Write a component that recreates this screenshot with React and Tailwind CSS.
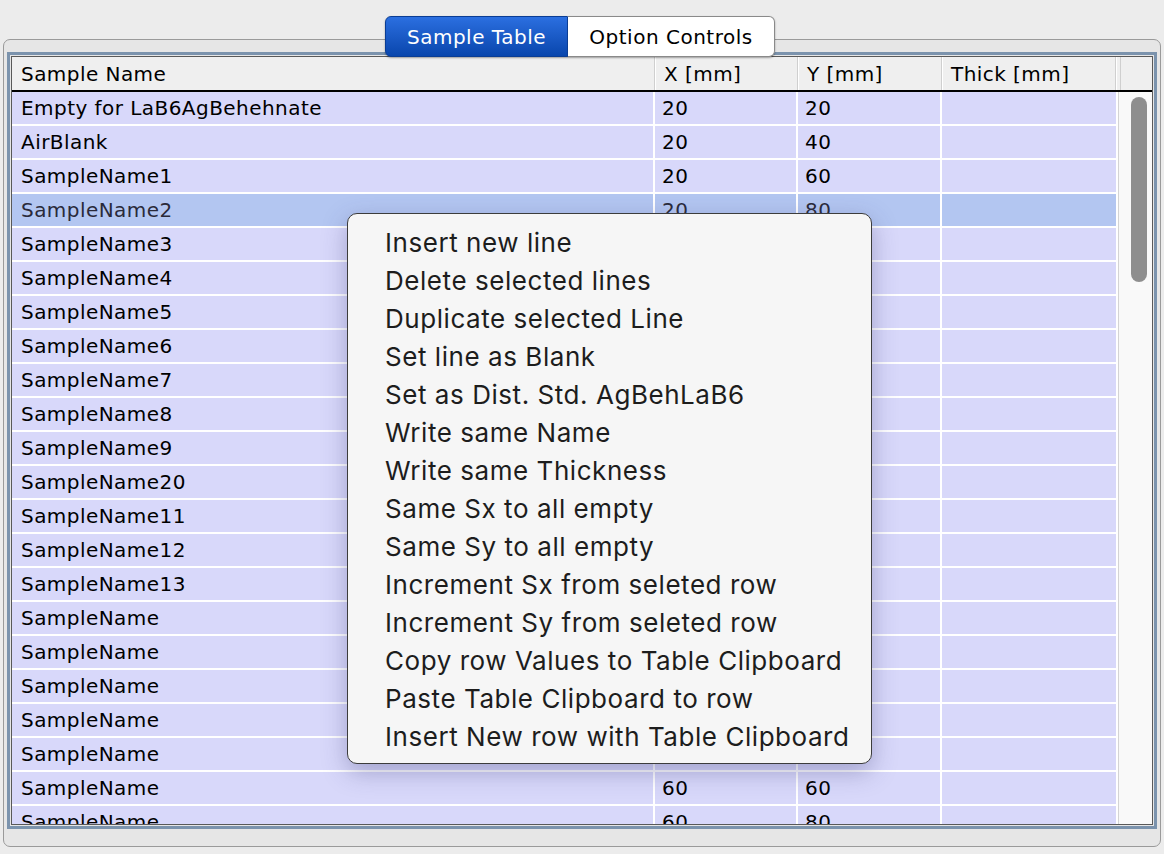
import React from "react";

const rows = [
  { name: "Empty for LaB6AgBehehnate", x: "20", y: "20" },
  { name: "AirBlank", x: "20", y: "40" },
  { name: "SampleName1", x: "20", y: "60" },
  { name: "SampleName2", x: "20", y: "80", selected: true },
  { name: "SampleName3", x: "40", y: "20" },
  { name: "SampleName4", x: "40", y: "40" },
  { name: "SampleName5", x: "40", y: "60" },
  { name: "SampleName6", x: "40", y: "80" },
  { name: "SampleName7", x: "60", y: "20" },
  { name: "SampleName8", x: "60", y: "40" },
  { name: "SampleName9", x: "60", y: "60" },
  { name: "SampleName20", x: "60", y: "80" },
  { name: "SampleName11", x: "80", y: "20" },
  { name: "SampleName12", x: "80", y: "40" },
  { name: "SampleName13", x: "80", y: "60" },
  { name: "SampleName", x: "80", y: "80" },
  { name: "SampleName", x: "40", y: "20" },
  { name: "SampleName", x: "40", y: "40" },
  { name: "SampleName", x: "60", y: "20" },
  { name: "SampleName", x: "60", y: "40" },
  { name: "SampleName", x: "60", y: "60" },
  { name: "SampleName", x: "60", y: "80" },
];

const menuItems = [
  "Insert new line",
  "Delete selected lines",
  "Duplicate selected Line",
  "Set line as Blank",
  "Set as Dist. Std. AgBehLaB6",
  "Write same Name",
  "Write same Thickness",
  "Same Sx to all empty",
  "Same Sy to all empty",
  "Increment Sx from seleted row",
  "Increment Sy from seleted row",
  "Copy row Values to Table Clipboard",
  "Paste Table Clipboard to row",
  "Insert New row with Table Clipboard",
];

const tableFont = { fontFamily: '"DejaVu Sans", "Liberation Sans", sans-serif' };

function HeaderCell({ label, width }) {
  return (
    <div
      className={`${width} h-full flex items-center pl-[9px] border-r border-[#cfcfcf] shadow-[1px_0_0_#ffffff]`}
    >
      {label}
    </div>
  );
}

function Row({ row }) {
  const bg = row.selected ? "bg-[#b3c6f1] text-[#2a2a3a]" : "bg-[#d8d8fa] text-black";
  return (
    <div className="flex h-[34px] border-b-2 border-white">
      <div className={`w-[643px] ${bg} flex items-center pl-[9px] border-r-2 border-white`}>{row.name}</div>
      <div className={`w-[143px] ${bg} flex items-center pl-[7px] border-r-2 border-white`}>{row.x}</div>
      <div className={`w-[144px] ${bg} flex items-center pl-[7px] border-r-2 border-white`}>{row.y}</div>
      <div className={`w-[174px] ${bg}`}></div>
    </div>
  );
}

export default function App() {
  return (
    <div className="w-[1164px] h-[854px] bg-[#ececec] relative overflow-hidden" style={tableFont}>
      <div className="pt-[39px] px-[3px]">
        {/* group box */}
        <div className="relative h-[808px] border border-[#9a9a9a] rounded-[7px] bg-[#e6e6e6] pt-[12px] px-[3px]">
          {/* blue frame */}
          <div className="h-[777px] border-[3px] border-[#7b93ad] bg-[#e6e6e6] p-px">
            <div className="h-full border border-[#595959] bg-white flex flex-col text-[20px] tracking-[0.45px]">
              {/* header */}
              <div className="flex h-[35px] bg-[#efefef] border-b-2 border-black shrink-0">
                <HeaderCell label="Sample Name" width="w-[643px]" />
                <HeaderCell label="X [mm]" width="w-[143px]" />
                <HeaderCell label="Y [mm]" width="w-[144px]" />
                <HeaderCell label="Thick [mm]" width="w-[174px]" />
                <div className="w-[5px] h-full border-r border-[#cfcfcf]"></div>
                <div className="flex-1"></div>
              </div>
              {/* body */}
              <div className="flex flex-1 min-h-0">
                <div className="w-[1106px] overflow-hidden bg-white">
                  {rows.map((r, i) => (
                    <Row key={i} row={r} />
                  ))}
                </div>
                <div className="flex-1 bg-[#f9f9f9] border-l border-[#d4d4d4] pl-[12px] pt-[5px]">
                  <div className="w-[16px] h-[185px] rounded-full bg-[#8e8e8e]"></div>
                </div>
              </div>
            </div>
          </div>
        </div>
      </div>

      {/* tabs */}
      <div className="absolute left-[385px] top-[16px] flex h-[41px] text-[20px] tracking-[0.5px] shadow-[0_1px_2px_rgba(0,0,0,0.35)] rounded-[6px]">
        <div className="w-[183px] flex items-center justify-center text-white rounded-l-[6px] bg-gradient-to-b from-[#2b6fe0] to-[#0846ad] border border-[#0a3d94]">
          Sample Table
        </div>
        <div className="w-[207px] flex items-center justify-center text-black bg-white rounded-r-[6px] border border-l-0 border-[#8a8a8a]">
          Option Controls
        </div>
      </div>

      {/* context menu */}
      <div
        className="absolute left-[347px] top-[213px] w-[525px] h-[551px] bg-[#f6f6f6] border border-[#3c3c3c] rounded-[10px] shadow-[0_8px_24px_rgba(60,60,120,0.35)] pt-[9px] pl-[37px]"
        style={{ fontFamily: 'Inter, "Liberation Sans", sans-serif' }}
      >
        {menuItems.map((m) => (
          <div key={m} className="h-[38px] flex items-center text-[26px] tracking-[0.55px] text-[#1d1d1d]">
            {m}
          </div>
        ))}
      </div>
    </div>
  );
}
